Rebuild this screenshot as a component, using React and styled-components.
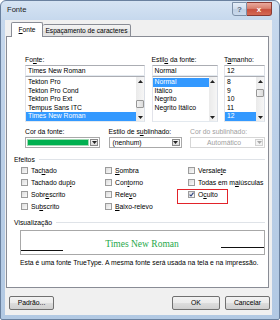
import React from 'react';
import styled, { createGlobalStyle, css } from 'styled-components';

const GlobalStyle = createGlobalStyle`
  html, body { margin: 0; padding: 0; background: #fff; }
  body { width: 280px; height: 320px; overflow: hidden; font-family: "Liberation Sans", Arial, sans-serif; color: #000; }
  * { box-sizing: border-box; }
`;

const Window = styled.div`
  width: 280px;
  height: 320px;
  display: flex;
  flex-direction: column;
  padding: 0 7px 4px 4px;
  border: 1px solid #6a819f;
  border-radius: 6px 6px 2px 2px;
  background: linear-gradient(180deg, #d6e4f3 0%, #c6d8ed 6%, #bcd0e8 40%, #b2c9e3 100%);
`;

const TitleBar = styled.div`
  height: 19px;
  display: flex;
  justify-content: space-between;
  align-items: flex-start;
  padding-left: 2px;
`;

const Title = styled.span`
  font-size: 7.6px;
  line-height: 17px;
  color: #1a1a1a;
`;

const Controls = styled.div`
  display: flex;
  margin-top: 1px;
`;

const CapButton = styled.div`
  height: 14px;
  width: ${p => p.$w}px;
  display: flex;
  align-items: center;
  justify-content: center;
  font-size: 8px;
  font-weight: bold;
  border: 1px solid ${p => (p.$close ? '#8a3a33' : '#7d90a8')};
  ${p => p.$close
    ? css`
        background: linear-gradient(180deg, #e9a99c 0%, #d8806f 45%, #c8503e 55%, #d56a55 100%);
        color: #fff;
        border-radius: 0 0 3px 0;
        border-left: none;
      `
    : css`
        background: linear-gradient(180deg, #e6eef8 0%, #d3e0ef 45%, #bfd0e4 55%, #cad9ec 100%);
        color: #5a6b80;
        border-radius: 0 0 0 3px;
      `}
`;

const Client = styled.div`
  flex: 1;
  background: #f0f0f0;
  display: flex;
  flex-direction: column;
  padding: 2px 3px 0 1px;
`;

const TabRow = styled.div`
  display: flex;
  align-items: flex-end;
  height: 15px;
  padding-left: 5px;
  margin-bottom: -1px;
  position: relative;
  z-index: 1;
`;

const Tab = styled.div`
  width: ${p => p.$w}px;
  height: ${p => (p.$active ? 15 : 13)}px;
  font-size: 6.6px;
  line-height: ${p => (p.$active ? 13 : 11)}px;
  text-align: center;
  white-space: nowrap;
  border: 1px solid #898c95;
  border-bottom: ${p => (p.$active ? 'none' : '1px solid #898c95')};
  border-radius: 2px 2px 0 0;
  background: ${p => (p.$active ? '#fff' : 'linear-gradient(180deg, #f3f3f3 0%, #ebebeb 50%, #dedede 51%, #e5e5e5 100%)')};
  ${p => !p.$active && css`border-left: none;`}
`;

const Panel = styled.div`
  height: 252px;
  background: #fff;
  border: 1px solid #898c95;
  padding: 17px 3px 0 7px;
  display: flex;
  flex-direction: column;
`;

const FieldRow = styled.div`
  margin-left: 11px;
  margin-top: ${p => p.$mt || 0}px;
  width: 240px;
  display: grid;
  grid-template-columns: ${p => p.$cols};
  justify-content: space-between;
`;

const Col = styled.div`
  display: flex;
  flex-direction: column;
`;

const Label = styled.div`
  height: 11px;
  font-size: 6.8px;
  line-height: 11px;
  white-space: nowrap;
  color: ${p => (p.$disabled ? '#a0a0a0' : '#000')};
`;

const TextBox = styled.div`
  height: 11px;
  border: 1px solid #abadb3;
  border-color: #abadb3 #dbdfe6 #e3e9ef #e2e3ea;
  padding-left: 2px;
  font-size: 6.8px;
  line-height: 9px;
  white-space: nowrap;
  overflow: hidden;
`;

const ListBox = styled.div`
  height: 46px;
  border: 1px solid #abadb3;
  border-color: #abadb3 #dbdfe6 #e3e9ef #e2e3ea;
  display: flex;
  background: #fff;
`;

const Items = styled.div`
  flex: 1;
  padding-top: 1px;
  overflow: hidden;
  min-width: 0;
`;

const Item = styled.div`
  height: 8.5px;
  line-height: 8.5px;
  padding-left: 2px;
  font-size: 6.8px;
  white-space: nowrap;
  ${p => p.$sel && css`background: #3399ff; color: #fff;`}
`;

const ScrollBar = styled.div`
  width: 8px;
  display: flex;
  flex-direction: column;
  background: linear-gradient(90deg, #eaeaea, #f6f6f6);
`;

const Arrow = styled.div`
  height: 8px;
  display: flex;
  align-items: center;
  justify-content: center;
`;

const Track = styled.div`
  flex: 1;
`;

const Thumb = styled.div`
  margin-top: ${p => p.$top}px;
  height: 8px;
  border: 1px solid #979797;
  border-radius: 1px;
  background: linear-gradient(90deg, #f2f2f2, #dcdcdc);
`;

const Combo = styled.div`
  height: 11px;
  display: flex;
  border: 1px solid ${p => (p.$disabled ? '#d6d6d6' : '#a9a9a9')};
  background: #fff;
  padding: 1px;
  gap: 1px;
`;

const Swatch = styled.div`
  flex: 1;
  background: #00b050;
  border: 1px solid #9fd9b2;
`;

const ComboText = styled.div`
  flex: 1;
  font-size: 6.8px;
  line-height: 7px;
  padding-left: 2px;
  white-space: nowrap;
  text-align: ${p => (p.$center ? 'center' : 'left')};
  color: ${p => (p.$disabled ? '#a0a0a0' : '#000')};
`;

const DropButton = styled.div`
  width: 8px;
  display: flex;
  align-items: center;
  justify-content: center;
  border: 1px solid ${p => (p.$disabled ? '#d2d2d2' : '#8a8a8a')};
  background: ${p => (p.$disabled ? '#f4f4f4' : 'linear-gradient(180deg, #f4f4f4, #dcdcdc)')};
`;

const SectionHead = styled.div`
  display: flex;
  align-items: center;
  height: 10px;
  margin-top: ${p => p.$mt}px;
  font-size: 6.8px;
`;

const Rule = styled.div`
  flex: 1;
  height: 1px;
  margin-left: 4px;
  background: #dfe3e8;
`;

const CheckGrid = styled.div`
  margin-left: 7px;
  display: grid;
  grid-template-columns: 84px 83px 1fr;
  grid-template-rows: repeat(4, 12px);
  grid-auto-flow: column;
`;

const CheckItem = styled.div`
  display: flex;
  align-items: center;
  gap: 3px;
  font-size: 6.8px;
  white-space: nowrap;
  position: relative;
  ${p => p.$marked && css`
    &::after {
      content: '';
      position: absolute;
      left: -11px;
      top: 1px;
      width: 49px;
      height: 13px;
      border: 1px solid #e2232a;
    }
  `}
`;

const Box = styled.span`
  width: 7px;
  height: 7px;
  flex-shrink: 0;
  border: 1px solid #9c9c9c;
  background: linear-gradient(135deg, #dcdcdc, #fafafa);
  display: inline-flex;
  align-items: center;
  justify-content: center;
`;

const Preview = styled.div`
  margin: 3px 0 0 6px;
  width: 245px;
  height: 25px;
  border: 1px solid #a8a8a8;
  display: flex;
  align-items: flex-start;
`;

const PLine = styled.div`
  width: ${p => p.$w}px;
  margin-top: ${p => p.$top}px;
  border-top: 1px solid #111;
`;

const PText = styled.div`
  flex: 1;
  text-align: center;
  padding-top: 7px;
  font-family: "Liberation Serif", "Times New Roman", serif;
  font-size: 9.5px;
  line-height: 12px;
  color: #1fa84a;
`;

const Desc = styled.div`
  margin: 3px 0 0 6px;
  font-size: 6.8px;
  line-height: 10px;
  white-space: nowrap;
`;

const ButtonRow = styled.div`
  margin-top: 8px;
  height: 14px;
  display: flex;
  gap: 5px;
  padding-left: 3px;
  margin-right: -1px;
`;

const Spacer = styled.div`flex: 1;`;

const Button = styled.div`
  width: ${p => p.$w}px;
  height: 14px;
  border: 1px solid #707070;
  border-radius: 2px;
  background: linear-gradient(180deg, #f2f2f2 0%, #ebebeb 48%, #dddddd 52%, #cfcfcf 100%);
  font-size: 6.8px;
  line-height: 12px;
  text-align: center;
`;

const Tri = ({ up, color = '#222' }) => (
  <svg width="5" height="3" viewBox="0 0 5 3">
    <polygon points={up ? '0,3 2.5,0 5,3' : '0,0 5,0 2.5,3'} fill={color} />
  </svg>
);

const Scroll = ({ thumb }) => (
  <ScrollBar>
    <Arrow><Tri up /></Arrow>
    <Track>{thumb !== undefined && <Thumb $top={thumb} />}</Track>
    <Arrow><Tri /></Arrow>
  </ScrollBar>
);

const List = ({ items, sel, thumb }) => (
  <ListBox>
    <Items>
      {items.map(i => <Item key={i} $sel={i === sel}>{i}</Item>)}
    </Items>
    <Scroll thumb={thumb} />
  </ListBox>
);

const Check = ({ label, checked, marked }) => (
  <CheckItem $marked={marked}>
    <Box>
      {checked && (
        <svg width="5" height="5" viewBox="0 0 5 5">
          <path d="M0.6 2.6 L2 4 L4.5 0.6" stroke="#2b3f7e" strokeWidth="1.1" fill="none" />
        </svg>
      )}
    </Box>
    <span>{label}</span>
  </CheckItem>
);

export default function App() {
  return (
    <>
      <GlobalStyle />
      <Window>
        <TitleBar>
          <Title>Fonte</Title>
          <Controls>
            <CapButton $w={15}>?</CapButton>
            <CapButton $w={25} $close>x</CapButton>
          </Controls>
        </TitleBar>
        <Client>
          <TabRow>
            <Tab $active $w={32}><u>F</u>onte</Tab>
            <Tab $w={88}>Espaçamento de caracteres</Tab>
          </TabRow>
          <Panel>
            <FieldRow $cols="120px 66px 41px">
              <Col>
                <Label>Fo<u>n</u>te:</Label>
                <TextBox>Times New Roman</TextBox>
                <List items={['Tekton Pro', 'Tekton Pro Cond', 'Tekton Pro Ext', 'Tempus Sans ITC', 'Times New Roman']} sel="Times New Roman" thumb={15} />
              </Col>
              <Col>
                <Label>Estil<u>o</u> da fonte:</Label>
                <TextBox>Normal</TextBox>
                <List items={['Normal', 'Itálico', 'Negrito', 'Negrito Itálico']} sel="Normal" />
              </Col>
              <Col>
                <Label>T<u>a</u>manho:</Label>
                <TextBox>12</TextBox>
                <List items={['8', '9', '10', '11', '12']} sel="12" thumb={4} />
              </Col>
            </FieldRow>
            <FieldRow $cols="75px 73px 75px" $mt={4}>
              <Col>
                <Label>Cor da fonte:</Label>
                <Combo>
                  <Swatch />
                  <DropButton><Tri /></DropButton>
                </Combo>
              </Col>
              <Col>
                <Label>Estilo de s<u>u</u>blinhado:</Label>
                <Combo>
                  <ComboText>(nenhum)</ComboText>
                  <DropButton><Tri /></DropButton>
                </Combo>
              </Col>
              <Col>
                <Label $disabled>Cor do sublinhado:</Label>
                <Combo $disabled>
                  <ComboText $center $disabled>Automático</ComboText>
                  <DropButton $disabled><Tri color="#a8a8a8" /></DropButton>
                </Combo>
              </Col>
            </FieldRow>
            <SectionHead $mt={6}>Efeitos<Rule /></SectionHead>
            <CheckGrid>
              <Check label={<>Tac<u>h</u>ado</>} />
              <Check label={<>Tachado dup<u>l</u>o</>} />
              <Check label={<>Sobr<u>e</u>scrito</>} />
              <Check label={<>Su<u>b</u>scrito</>} />
              <Check label={<><u>S</u>ombra</>} />
              <Check label={<>Con<u>t</u>orno</>} />
              <Check label={<>Rele<u>v</u>o</>} />
              <Check label={<><u>B</u>aixo-relevo</>} />
              <Check label={<>Versale<u>t</u>e</>} />
              <Check label={<>Todas em m<u>a</u>iúsculas</>} />
              <Check label={<>O<u>c</u>ulto</>} checked marked />
            </CheckGrid>
            <SectionHead $mt={5}>Visualização<Rule /></SectionHead>
            <Preview>
              <PLine $w={42} $top={19} />
              <PText>Times New Roman</PText>
              <PLine $w={43} $top={16} />
            </Preview>
            <Desc>Esta é uma fonte TrueType. A mesma fonte será usada na tela e na impressão.</Desc>
          </Panel>
          <ButtonRow>
            <Button $w={45}>Padrão...</Button>
            <Spacer />
            <Button $w={48}>OK</Button>
            <Button $w={45}>Cancelar</Button>
          </ButtonRow>
        </Client>
      </Window>
    </>
  );
}
